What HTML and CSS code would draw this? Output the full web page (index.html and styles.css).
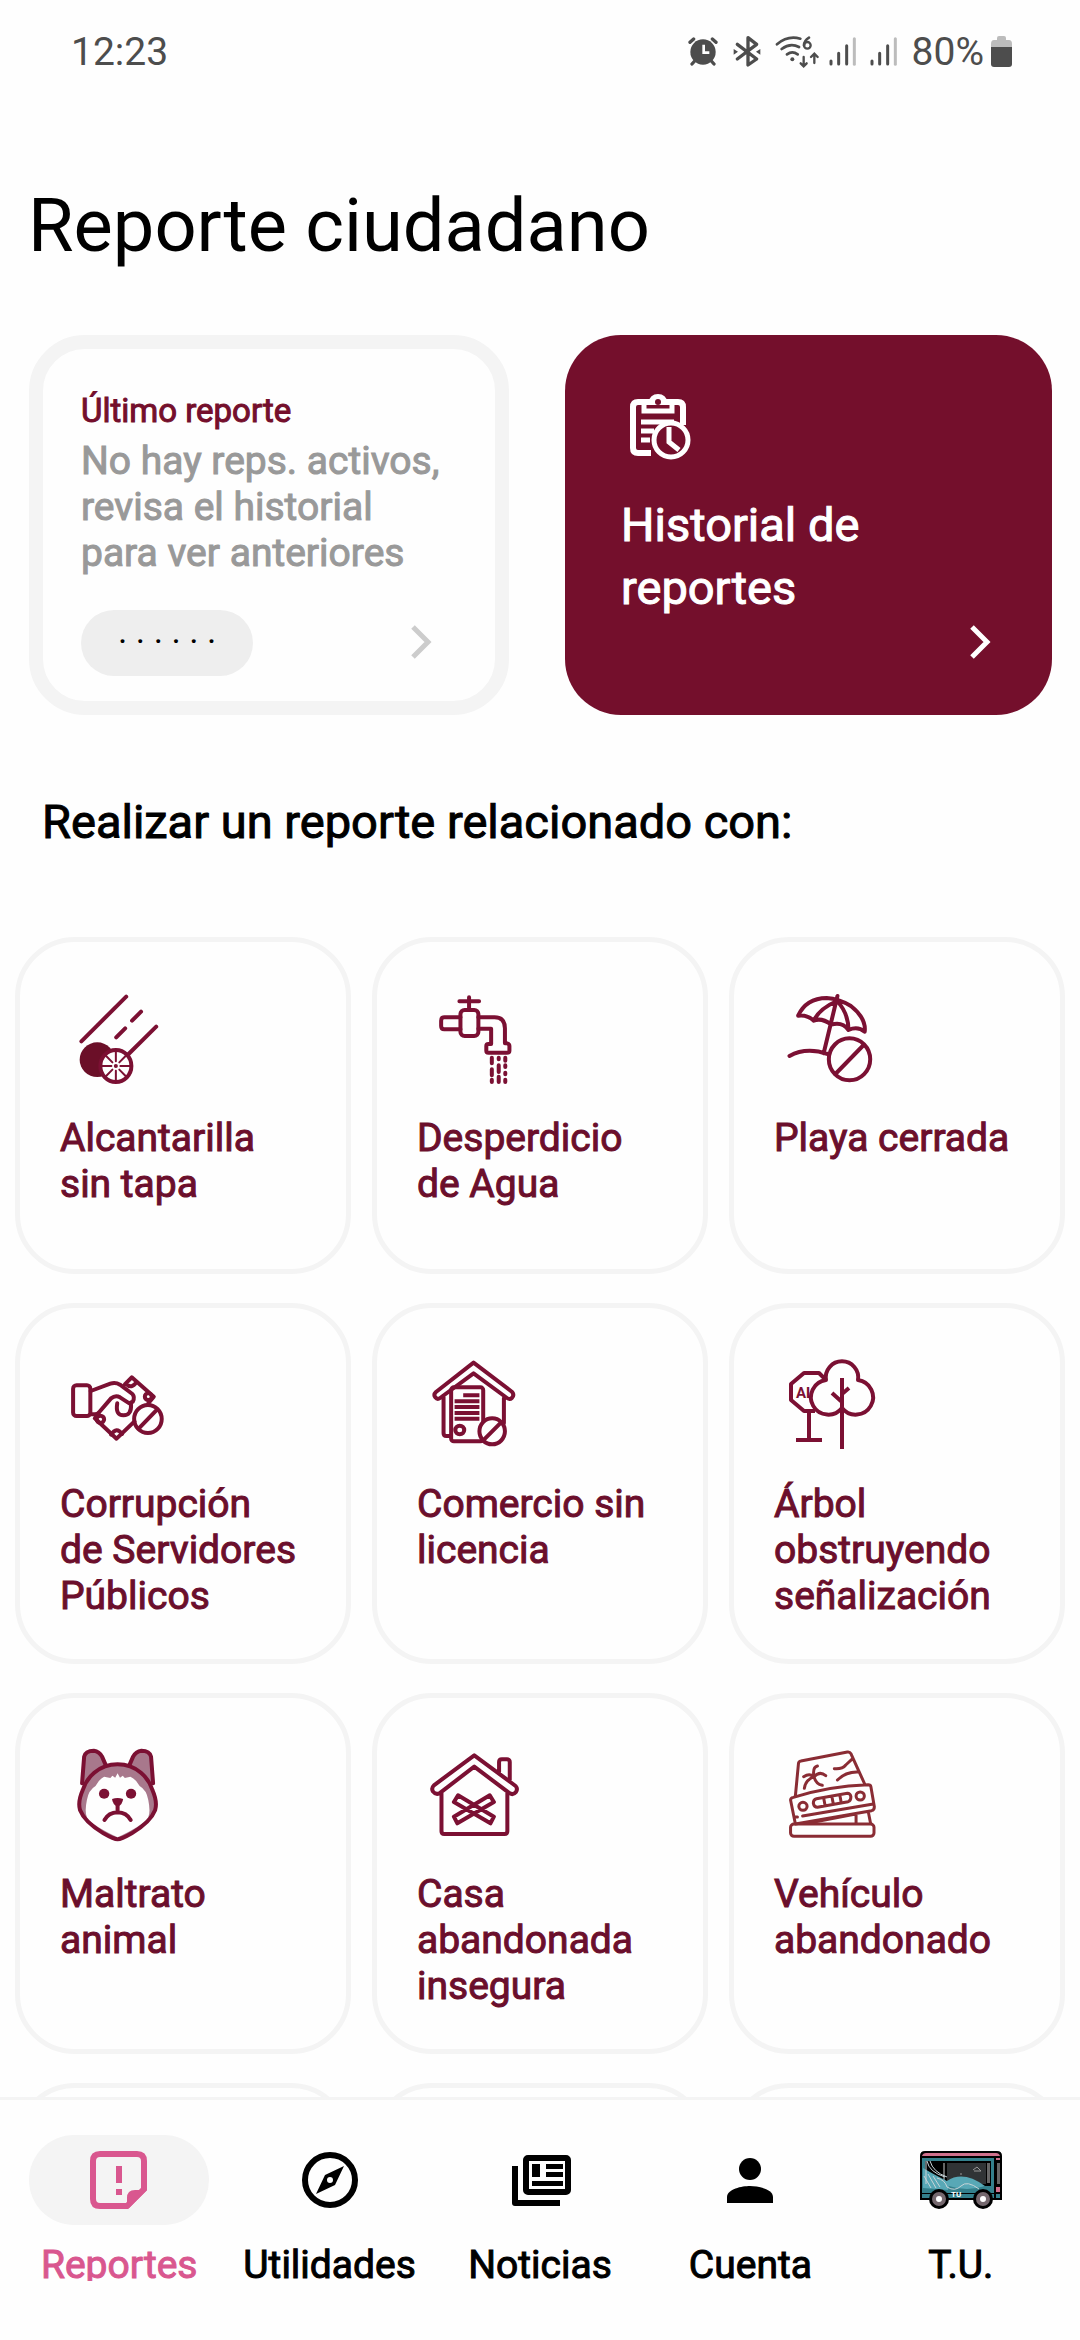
FILE: index.html
```html
<!DOCTYPE html>
<html lang="es">
<head>
<meta charset="utf-8">
<meta name="viewport" content="width=device-width, initial-scale=1">
<title>Reporte ciudadano</title>
<link rel="stylesheet" href="styles.css">
</head>
<body>
<div class="app">
  <header class="status">
    <span class="status-time">12:23</span>
    <div class="status-icons">
      <svg width="30" height="32" viewBox="82 50 90 96" aria-hidden="true"><circle cx="127" cy="98" r="38" fill="#4d4d4d"/><path d="M88 69L99 59M166 69L155 59M102 125L94 134M152 125L160 134" stroke="#4d4d4d" stroke-width="10" stroke-linecap="round"/><path d="M129 76V100H146" fill="none" stroke="#fefefe" stroke-width="8"/></svg>
      <svg class="gap-bt" width="28" height="34" viewBox="217 46 84 102" aria-hidden="true"><path d="M230 74L288 118L262 136V54L288 74L230 118" fill="none" stroke="#4d4d4d" stroke-width="10" stroke-linejoin="round" stroke-linecap="round"/><path d="M219 88L232 96L219 105ZM299 88L286 96L299 105Z" fill="#4d4d4d"/></svg>
      <svg class="gap-wifi" width="45" height="34" viewBox="342 46 135 102" aria-hidden="true"><g fill="none" stroke="#4d4d4d" stroke-width="8" stroke-linecap="round"><path d="M348 74Q380 46 418 57M362 88Q388 68 414 82M378 104Q394 92 410 104"/><path d="M444 54Q430 62 429 77"/><circle cx="439" cy="77" r="10" stroke-width="7"/><path d="M428 112V138M419 131L428 140L437 131M460 130V104M450 112L460 102L470 112" stroke-width="7"/></g><circle cx="394" cy="119" r="6" fill="#4d4d4d"/></svg>
      <svg class="gap-signal" width="28" height="32" viewBox="503 48 84 96" aria-hidden="true"><path d="M509 123V132M532 100V132M556 77V132" stroke="#4d4d4d" stroke-width="9" stroke-linecap="round"/><path d="M579 56V133" stroke="#bcbcbc" stroke-width="9" stroke-linecap="round"/></svg>
      <svg class="gap-signal" width="28" height="32" viewBox="503 48 84 96" aria-hidden="true"><path d="M509 123V132M532 100V132M556 77V132" stroke="#4d4d4d" stroke-width="9" stroke-linecap="round"/><path d="M579 56V133" stroke="#bcbcbc" stroke-width="9" stroke-linecap="round"/></svg>
      <span class="status-battery">80%</span>
      <svg class="gap-batt" width="22" height="32" viewBox="0 0 22 32" aria-hidden="true"><path d="M7 2Q7 0 9 0H14Q16 0 16 2V4H19Q22 4 22 8V11H1V8Q1 4 4 4H7Z" fill="#bcbcbc"/><path d="M1 11H22V28Q22 31 19 31H4Q1 31 1 28Z" fill="#4d4d4d"/></svg>
    </div>
  </header>

  <main class="content">
    <h1 class="title">Reporte ciudadano</h1>

    <section class="summary">
      <a class="last" href="#ultimo">
        <span class="last-label">Último reporte</span>
        <span class="last-text">No hay reps. activos,<br>revisa el historial<br>para ver anteriores</span>
        <span class="last-foot">
          <span class="pill">· · · · · ·</span>
          <svg class="chevron" width="26" height="40" viewBox="0 0 26 40" aria-hidden="true"><path d="M4 4L19 19L4 34" fill="none" stroke="#ccc" stroke-width="5"/></svg>
        </span>
      </a>
      <a class="history" href="#historial">
        <svg class="history-icon" width="64" height="70" viewBox="0 0 64 70" aria-hidden="true"><g fill="none" stroke="#fff" stroke-width="6"><path d="M23 62H10Q5 62 5 57V16Q5 11 10 11H50Q55 11 55 16V34"/><path d="M16 12V20H44V12" stroke-width="5"/><path d="M13 31H46M13 40H26M13 49H22" stroke-width="5"/></g><path d="M20 12Q22 3 30 3Q38 3 40 12Z" fill="#fff"/><circle cx="30" cy="11" r="3" fill="#740f2c"/><circle cx="43" cy="49" r="17" fill="#740f2c" stroke="#fff" stroke-width="5"/><path d="M41 36V51L51 59" fill="none" stroke="#fff" stroke-width="5"/></svg>
        <span class="history-text">Historial de<br>reportes</span>
        <svg class="chevron chevron-end" width="26" height="40" viewBox="0 0 26 40" aria-hidden="true"><path d="M4 4L19 19L4 34" fill="none" stroke="#fff" stroke-width="5"/></svg>
      </a>
    </section>

    <h2 class="subtitle">Realizar un reporte relacionado con:</h2>

    <section class="grid">
      <a class="tile" href="#alcantarilla">
        <svg class="tile-icon" viewBox="174 186 348 330" preserveAspectRatio="none" aria-hidden="true"><path d="M236 364L366 230M383 302L409 275M337 352L363 325M370 405L453 320"/><ellipse cx="282" cy="419" rx="51" ry="52" fill="#6b0f28" stroke="none"/><ellipse cx="336" cy="438" rx="45" ry="48" fill="#fefefe"/><path stroke-width="2" d="M336 392V424M336 452V484M293 438H323M349 438H379M305 405L326 427M346 449L367 471M305 471L326 449M346 427L367 405"/><circle cx="336" cy="438" r="3" stroke-width="2"/></svg>
        <span>Alcantarilla<br>sin tapa</span>
      </a>
      <a class="tile" href="#agua">
        <svg class="tile-icon" viewBox="1211 186 348 330" preserveAspectRatio="none" aria-hidden="true"><path d="M1334 244H1391M1362 232V268"/><rect x="1337" y="270" width="52" height="78" rx="12"/><path d="M1337 292H1290Q1281 292 1281 302V318Q1281 328 1290 328H1337M1389 292H1436Q1466 292 1466 325V370H1472Q1479 372 1479 378V392Q1479 398 1472 398H1418Q1412 398 1412 392V378Q1412 372 1418 372H1426V326H1389"/><path d="M1428 413V430M1428 448V466M1428 479V486M1448 413V418M1448 436V456M1448 470V486M1467 413V422M1467 436V441M1467 458V463M1467 479V486"/></svg>
        <span>Desperdicio<br>de Agua</span>
      </a>
      <a class="tile" href="#playa">
        <svg class="tile-icon" viewBox="682 186 348 330" preserveAspectRatio="none" aria-hidden="true"><path d="M752 287Q775 235 835 234Q870 236 905 258Q950 295 945 335Q925 318 898 330Q880 304 848 314Q820 292 797 302Q778 283 752 287ZM865 243Q815 265 797 302M865 243Q898 280 898 330M866 228L826 400M727 408Q775 380 838 402"/><ellipse cx="901" cy="418" rx="60" ry="63"/><path d="M860 462L942 375"/></svg>
        <span>Playa cerrada</span>
      </a>
      <a class="tile" href="#corrupcion">
        <svg class="tile-icon" viewBox="174 174 348 330" preserveAspectRatio="none" aria-hidden="true"><rect x="212" y="286" width="50" height="92" rx="10"/><path d="M263 303L320 281Q335 276 348 284L384 312Q392 322 385 335L375 340L348 322Q335 314 322 325L288 366Q283 373 275 373H263M362 283L382 262L446 320L430 340M275 385L338 446L390 394M275 385L288 366M366 282Q382 298 396 276"/><circle cx="430" cy="320" r="10"/><circle cx="291" cy="388" r="11"/><path d="M322 434Q338 408 354 432M340 340Q334 376 358 376Q382 376 380 342"/><ellipse cx="429" cy="387" rx="40" ry="42"/><path d="M402 416L456 358"/></svg>
        <span>Corrupción<br>de Servidores<br>Públicos</span>
      </a>
      <a class="tile" href="#comercio">
        <svg class="tile-icon" viewBox="1211 174 348 330" preserveAspectRatio="none" aria-hidden="true"><path d="M1375 218L1487 306Q1494 316 1486 324Q1480 330 1472 324L1375 250L1278 324Q1270 330 1264 322Q1258 314 1266 306ZM1288 322V430Q1288 438 1296 438H1308M1463 325V400"/><rect x="1310" y="292" width="93" height="162" rx="8"/><path d="M1345 316H1392M1320 334H1392M1320 351H1392M1320 369H1392M1320 386H1392" stroke-linecap="butt"/><circle cx="1335" cy="420" r="13"/><ellipse cx="1429" cy="424" rx="37" ry="39" fill="#fefefe"/><path d="M1403 451L1455 397"/></svg>
        <span>Comercio sin<br>licencia</span>
      </a>
      <a class="tile" href="#arbol">
        <svg class="tile-icon" viewBox="0 0 120 110" aria-hidden="true"><path fill="none" stroke-linecap="butt" d="M51 31L45 25H30L17 36V52L30 63H41M35 64V92M22 92H48" stroke-width="4"/><text class="sign" x="22" y="50">ALT</text><path d="M52 32A16.2 16.2 0 1 1 84 32A17.4 17.4 0 1 1 68 60A17.4 17.4 0 1 1 52 32Z" fill="#fefefe" stroke-width="4"/><path stroke-linecap="butt" d="M68 30V101M58 45L68 54M75 40L68 46" stroke-width="4"/></svg>
        <span>Árbol<br>obstruyendo<br>señalización</span>
      </a>
      <a class="tile" href="#animal">
        <svg class="tile-icon" viewBox="174 174 348 330" preserveAspectRatio="none" aria-hidden="true"><path fill="#a8788c" d="M238 310L244 230Q248 212 272 212Q288 214 296 230L312 268M444 310L438 230Q434 212 410 212Q394 214 386 230L370 268"/><path fill="#a8788c" d="M341 253C285 253 250 295 240 330Q225 365 232 390Q245 425 300 460Q330 478 341 478Q352 478 382 460Q437 425 450 390Q457 365 442 330C432 295 397 253 341 253Z"/><path fill="#fefefe" stroke="none" d="M341 280L348 293L356 287L362 294L378 290Q395 298 405 318Q425 330 430 360Q437 395 430 412Q410 440 341 472Q272 440 252 412Q245 395 252 360Q257 330 277 318Q287 298 302 290L320 294L326 287L334 293Z"/><g fill="#7b1033" stroke="none"><circle cx="302" cy="341" r="15"/><circle cx="380" cy="341" r="15"/><path d="M325 357Q341 351 357 357Q356 372 341 382Q326 372 325 357Z"/></g><path d="M341 378V396M303 420Q315 398 341 397Q367 398 379 420"/></svg>
        <span>Maltrato<br>animal</span>
      </a>
      <a class="tile" href="#casa">
        <svg class="tile-icon" viewBox="1211 174 348 330" preserveAspectRatio="none" aria-hidden="true"><path d="M1377 226L1497 318Q1504 326 1498 336Q1490 346 1480 340L1377 260L1276 340Q1265 345 1257 334Q1252 324 1260 316ZM1282 340V454Q1282 462 1290 462H1465Q1473 462 1473 454V340M1449 276V246Q1449 238 1457 238H1472Q1480 238 1480 246V300M1330 346L1434 410L1424 430L1318 366ZM1422 346L1318 410L1328 430L1434 366Z"/></svg>
        <span>Casa<br>abandonada<br>insegura</span>
      </a>
      <a class="tile" href="#vehiculo">
        <svg class="tile-icon tile-icon-thin" viewBox="682 174 348 330" preserveAspectRatio="none" aria-hidden="true"><path d="M744 348L753 250Q754 244 760 243L895 216Q902 215 905 221L945 312M730 360Q730 354 738 352Q840 318 955 314Q962 314 963 320L973 380Q973 390 965 392L744 432ZM765 408L970 372M742 411H750M805 356L895 340Q903 340 905 350Q905 362 897 365L808 382Q798 382 796 370Q796 358 805 356ZM826 354L830 376M850 350L854 372M873 346L877 368M920 402V430M956 398L962 430M780 430L915 403M798 290Q785 278 768 290M798 290Q773 300 770 325M798 290Q803 312 822 316M798 290Q815 272 832 287M798 290Q793 262 808 258M857 266Q880 268 890 255L910 236M866 300Q890 275 925 276"/><circle cx="766" cy="379" r="12"/><circle cx="932" cy="348" r="12"/><rect x="730" y="432" width="242" height="37" rx="10"/></svg>
        <span>Vehículo<br>abandonado</span>
      </a>
      <div class="tile"></div>
      <div class="tile"></div>
      <div class="tile"></div>
    </section>
  </main>

  <nav class="nav">
    <a class="nav-item nav-active" href="#reportes">
      <span class="nav-icon"><svg width="68" height="68" viewBox="0 0 68 68" aria-hidden="true"><path fill="none" stroke="#d9578f" stroke-width="6" d="M42 60H15Q8 60 8 53V15Q8 8 15 8H52Q59 8 59 15V43Z"/><path fill="#d9578f" d="M62 44L44 62H42V52Q42 44 50 44ZM31 20H37V37H31ZM31 43H37V49H31Z"/></svg></span>
      <span class="nav-label">Reportes</span>
    </a>
    <a class="nav-item" href="#utilidades">
      <span class="nav-icon"><svg width="68" height="68" viewBox="0 0 68 68" aria-hidden="true"><circle cx="34" cy="34" r="25" fill="none" stroke="#000" stroke-width="6"/><path fill="#000" fill-rule="evenodd" d="M48 20L39 39L20 48L29 29ZM34 31A3 3 0 1 0 34 37A3 3 0 1 0 34 31Z"/></svg></span>
      <span class="nav-label">Utilidades</span>
    </a>
    <a class="nav-item" href="#noticias">
      <span class="nav-icon"><svg width="68" height="68" viewBox="0 0 68 68" aria-hidden="true"><path fill="none" stroke="#000" stroke-width="6" stroke-linejoin="round" d="M9 20V57H54"/><rect x="20" y="12" width="42" height="34" rx="2" fill="none" stroke="#000" stroke-width="6"/><path d="M26 18H34V31H26ZM40 18H57V23H40ZM40 26H57V31H40ZM26 35H57V40H26Z"/></svg></span>
      <span class="nav-label">Noticias</span>
    </a>
    <a class="nav-item" href="#cuenta">
      <span class="nav-icon"><svg width="68" height="68" viewBox="0 0 68 68" aria-hidden="true"><circle cx="34" cy="23" r="11"/><path d="M11 57V51C11 43 26 40 34 40S57 43 57 51V57Z"/></svg></span>
      <span class="nav-label">Cuenta</span>
    </a>
    <a class="nav-item" href="#tu">
      <span class="nav-icon"><svg width="84" height="60" viewBox="0 0 84 60" aria-hidden="true"><path d="M1 50V6Q1 1 6 1H78Q83 1 83 6V50Z"/><path fill="#d0708c" d="M3 6Q4 3 7 3H77Q80 3 81 6ZM77 8H81V10H77ZM77 37H81V42H77Z"/><path fill="#34808c" d="M3 8H75V48H3ZM77 44H81V48H77Z"/><path d="M6 11H72V36H6Z"/><path fill="#303335" d="M28 13H67V34H28Z"/><path fill="#666" d="M24 13H26V34H24ZM68 13H71V33H68ZM78 13H81V34H78Z"/><path fill="#58a8b6" d="M4 18Q14 24 28 31Q44 20 66 36Q50 46 30 40L4 38Z"/><path fill="#34808c" d="M30 36Q48 42 66 36V44H28Z"/><path fill="none" stroke="#c8d4d8" d="M7 11V34M8 11Q10 22 26 27M11 11Q14 22 28 27M5 26L12 38M9 24L17 38M14 26L21 37M18 28Q26 30 28 37Q36 42 42 36T60 39"/><path fill="none" stroke="#999" d="M54 20L58 17L62 21H55M41 24H43"/><path d="M3 43H83V44H3Z"/><text class="bus-name" x="32" y="47">TU</text><circle cx="20" cy="49" r="10"/><circle cx="64" cy="49" r="10"/><g fill="#fff" stroke="#75686e" stroke-width="4"><circle cx="20" cy="49" r="5"/><circle cx="64" cy="49" r="5"/></g></svg></span>
      <span class="nav-label">T.U.</span>
    </a>
  </nav>
</div>
</body>
</html>
```
FILE: styles.css
```css
* { box-sizing: border-box; }

body {
  margin: 0;
  background: #fefefe;
  color: #000;
  font-family: Roboto, "Noto Sans", sans-serif;
}

a { color: inherit; text-decoration: none; }
svg { display: block; flex: none; }

.app {
  display: flex;
  flex-direction: column;
  height: 100vh;
  overflow: hidden;
}

/* status bar */
.status {
  display: flex;
  justify-content: space-between;
  align-items: center;
  padding: 29px 68px 27px 71px;
  color: #4d4d4d;
  font-size: 39px;
  line-height: 46px;
}
.status-icons { display: flex; align-items: center; }
.status-battery { margin-left: 14px; }
.gap-bt { margin-left: 15px; }
.gap-wifi { margin-left: 14px; }
.gap-signal { margin-left: 9px; }
.gap-signal + .gap-signal { margin-left: 13px; }
.gap-batt { margin-left: 6px; }

.content {
  flex: 1;
  min-height: 0;
  overflow: hidden auto;
  scrollbar-width: none;
}

.title {
  margin: 0;
  padding: 82px 28px 67px;
  font-size: 74px;
  font-weight: 400;
  line-height: 84px;
}

/* summary cards */
.summary {
  display: grid;
  grid-template-columns: 480fr 487fr;
  gap: 56px;
  padding: 0 28px 0 29px;
}
.last, .history {
  display: flex;
  flex-direction: column;
  min-height: 380px;
  border-radius: 56px;
}
.last {
  padding: 42px 38px 25px;
  border: 14px solid #f4f4f4;
}
.last-label {
  color: #740f2c;
  font-size: 33px;
  line-height: 40px;
  -webkit-text-stroke: 1px;
}
.last-text {
  margin-top: 7px;
  color: #999;
  font-size: 39px;
  line-height: 46px;
  -webkit-text-stroke: 1px;
}
.last-foot {
  display: flex;
  justify-content: space-between;
  align-items: center;
  margin-top: auto;
}
.pill {
  padding: 10px 37px;
  border-radius: 33px;
  background: #eee;
  color: #000;
  font-size: 35px;
  line-height: 46px;
}
.chevron { margin-right: 22px; }
.history {
  padding: 56px 36px 52px 56px;
  background: #740f2c;
  color: #fff;
}
.history-icon { margin-left: 7px; }
.history-text {
  margin-top: 32px;
  font-size: 47px;
  line-height: 63px;
  -webkit-text-stroke: 1px;
}
.chevron-end { align-self: flex-end; margin-top: auto; }

.subtitle {
  margin: 0;
  padding: 78px 42px 86px;
  font-size: 47px;
  font-weight: 400;
  line-height: 58px;
  -webkit-text-stroke: 1px;
}

/* report categories */
.grid {
  display: grid;
  grid-template-columns: repeat(3, 1fr);
  gap: 29px 21px;
  padding: 0 15px 29px;
}
.tile {
  min-height: 337px;
  padding: 40px;
  border: 5px solid #f4f4f4;
  border-radius: 60px;
  color: #6b0f2c;
  font-size: 39px;
  line-height: 46px;
  white-space: nowrap;
  -webkit-text-stroke: 1px;
}
.tile-icon {
  width: 120px;
  height: 110px;
  margin-bottom: 23px;
  fill: none;
  stroke: #7b1033;
  stroke-width: 4px;
  stroke-linecap: round;
  stroke-linejoin: round;
}
.tile-icon * { vector-effect: non-scaling-stroke; }
.tile-icon-thin { stroke: #8a2c34; stroke-width: 3px; }
.sign {
  fill: #7b1033;
  stroke: none;
  font-size: 15px;
  font-weight: 700;
  -webkit-text-stroke: 0;
}

/* bottom navigation */
.nav {
  display: grid;
  grid-template-columns: repeat(5, 1fr);
  padding: 35px 14px 52px;
  border-top: 3px solid #f4f4f4;
  font-size: 39px;
  -webkit-text-stroke: 1px;
}
.nav-item {
  display: flex;
  flex-direction: column;
  align-items: center;
}
.nav-icon {
  display: flex;
  justify-content: center;
  align-items: center;
  width: 180px;
  height: 90px;
  border-radius: 45px;
}
.nav-active { color: #d9578f; }
.nav-active .nav-icon { background: #f4f4f4; }
.nav-label {
  margin-top: 17px;
  line-height: 46px;
}
/* the selected label is trimmed just below its baseline */
.nav-active .nav-label {
  height: 39px;
  overflow: hidden;
}
.bus-name {
  fill: #fff;
  font-size: 8px;
  font-weight: 700;
  -webkit-text-stroke: 0;
}
```
